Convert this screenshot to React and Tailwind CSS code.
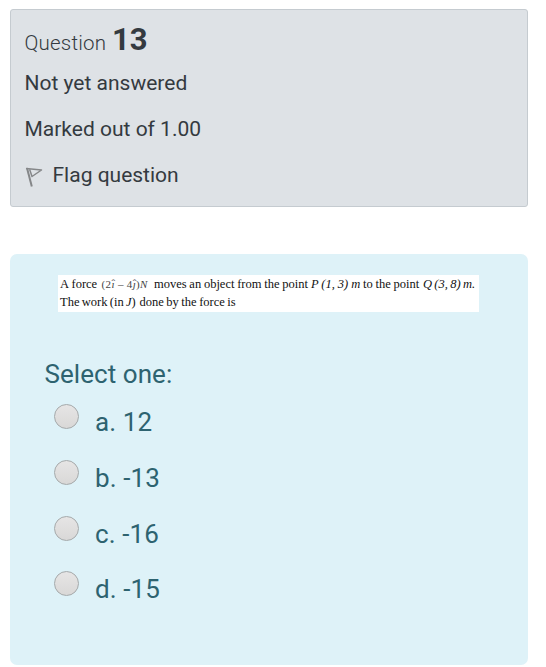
const options = ['a. 12', 'b. -13', 'c. -16', 'd. -15'];

function FlagIcon() {
  return (
    <svg className="mt-[15px] h-5 w-[18px] shrink-0" viewBox="0 0 18 20" fill="none" stroke="#858789" strokeLinejoin="round">
      <path d="M2 1 6.800 19.500" strokeWidth="2" />
      <path d="M1 1.500 16.500 3 7 9.500 4.500 2" strokeWidth="1.500" />
    </svg>
  );
}

function Radio() {
  return (
    <span className="mt-[3px] h-[25px] w-[25px] shrink-0 rounded-full border border-[#a5a9aa] bg-linear-to-b from-[#e6e5e5] to-[#d9d8d7]" />
  );
}

function Segment({ className, children }) {
  return <span className={`block shrink-0 whitespace-pre ${className}`}>{children}</span>;
}

function UnitVector({ children }) {
  return (
    <i className="relative">
      {children}
      <span className="absolute -top-[4px] left-[0px] text-[11px] leading-[18px] not-italic">ˆ</span>
    </i>
  );
}

export default function App() {
  return (
    <main className="h-[667px] w-[546px] overflow-hidden bg-white px-[10px] pt-[9px] font-[Roboto,sans-serif]">
      <section className="h-[198px] w-[518px] rounded-[3px] border border-[#c5cbd0] bg-[#dee2e6] pl-[13.500px] text-[21px] text-[#343a40]">
        <h3 className="flex h-[50px] items-baseline pt-[10px] leading-[40px]">
          <span className="w-[87.500px] text-[20.500px] font-light tracking-[0.200px]">Question</span>
          <span className="text-[31px] font-bold">13</span>
        </h3>
        <div className="h-[46px] leading-[46px]">Not yet answered</div>
        <div className="h-[46px] leading-[46px]">Marked out of 1.00</div>
        <div className="flex h-[46px] gap-[10px] leading-[46px]">
          <FlagIcon />
          <span>Flag question</span>
        </div>
      </section>

      <section className="mt-[47px] h-[411px] w-[518px] rounded-[7px] bg-[#def2f8] pt-[21px] text-[26px] text-[#2d6370]">
        <div className="ml-[48px] h-[37px] w-[421px] bg-white pl-[2px] font-['Liberation_Serif',serif] text-[12.500px] leading-[18px] text-[#111]">
          <div className="flex">
            <Segment className="w-[41.500px]">A force</Segment>
            <Segment className="w-[52.500px] text-[11px] tracking-[0.350px] text-[#444]">(2<UnitVector>ı</UnitVector> – 4<UnitVector>ȷ</UnitVector>)<i>N</i></Segment>
            <Segment className="w-[157px] [word-spacing:-0.4px]">moves an object from the point</Segment>
            <Segment className="w-[52px] italic [word-spacing:-0.2px]">P (1, 3) m</Segment>
            <Segment className="w-[60px] [word-spacing:-0.4px]">to the point</Segment>
            <Segment className="italic [word-spacing:-0.8px]">Q (3, 8) m.</Segment>
          </div>
          <div className="flex">
            <Segment className="w-[79.500px] [word-spacing:-0.8px]">The work (in <i>J</i>)</Segment>
            <Segment className="[word-spacing:-0.6px]">done by the force is</Segment>
          </div>
        </div>

        <div className="ml-[34.500px] mt-[42px] h-[40px] leading-[40px] tracking-[0.060px]">Select one:</div>
        <div className="ml-[44px] mt-[7px] flex flex-col">
          {options.map((label) => (
            <label key={label} className="flex h-[55.800px] gap-[16px] leading-[42px]">
              <Radio />
              <span className="tracking-[0.1px]">{label}</span>
            </label>
          ))}
        </div>
      </section>
    </main>
  );
}
